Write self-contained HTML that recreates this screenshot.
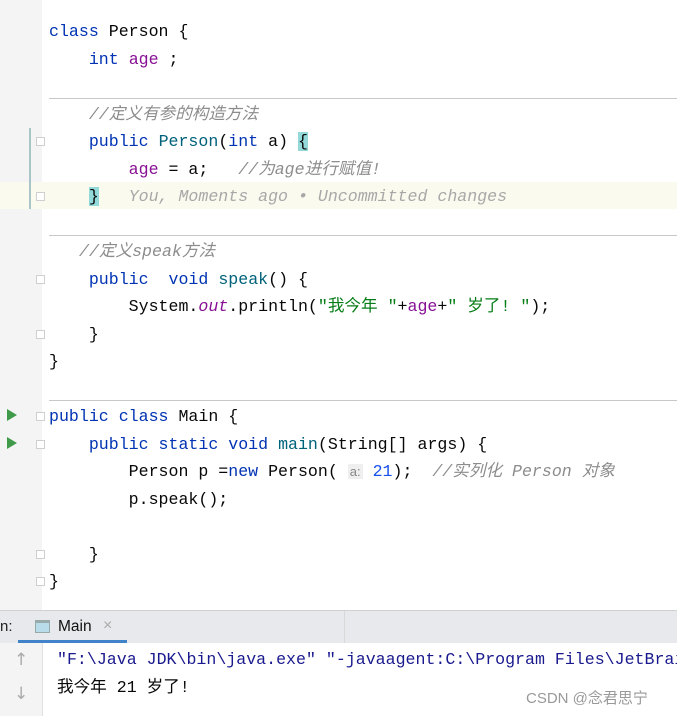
<!DOCTYPE html>
<html><head><meta charset="utf-8"><style>
body{margin:0;width:677px;height:716px;overflow:hidden;background:#fff;position:relative;font-family:"Liberation Mono","Noto Sans CJK SC",monospace;font-size:16.6px;}
.g{position:absolute;left:0;top:0;width:42px;height:610px;background:#f4f4f4;}
.l{position:absolute;left:49px;white-space:pre;height:27px;line-height:27px;color:#080808;}
.k{color:#0033b3}.f{color:#00627a}.v{color:#871094}.c{color:#8c8c8c;font-style:italic}.s{color:#067d17}.n{color:#1750eb}
.sep{position:absolute;left:49px;right:0;height:1px;background:#c8c8c8}
.br{background:#93d9d9}
.run{position:absolute;left:7px;width:0;height:0;border-left:10px solid #3f9b4a;border-top:6px solid transparent;border-bottom:6px solid transparent}
.fold{position:absolute;left:36px;width:9px;height:9px;border:1px solid #cfcfcf;background:#fff;box-sizing:border-box}
</style></head><body>
<div class="g"></div>
<div style="position:absolute;left:0;top:182px;width:677px;height:27px;background:#fbfaee"></div>
<div style="position:absolute;left:29px;top:128px;width:2px;height:81px;background:#a9c5c8"></div>
<div class="sep" style="top:98px"></div>
<div class="sep" style="top:235px"></div>
<div class="sep" style="top:400px"></div>
<div class="run" style="top:409px"></div>
<div class="run" style="top:437px"></div>
<div class="fold" style="top:137px"></div><div class="fold" style="top:192px"></div>
<div class="fold" style="top:275px"></div><div class="fold" style="top:330px"></div>
<div class="fold" style="top:412px"></div><div class="fold" style="top:440px"></div>
<div class="fold" style="top:550px"></div><div class="fold" style="top:577px"></div>
<div class="l" style="top:18px"><span class="k">class</span> Person {</div>
<div class="l" style="top:46px">    <span class="k">int</span> <span class="v">age</span> ;</div>
<div class="l" style="top:101px">    <span class="c">//定义有参的构造方法</span></div>
<div class="l" style="top:128px">    <span class="k">public</span> <span class="f">Person</span>(<span class="k">int</span> a) <span class="br">{</span></div>
<div class="l" style="top:156px">        <span class="v">age</span> = a;   <span class="c">//为age进行赋值!</span></div>
<div class="l" style="top:183px">    <span class="br">}</span>   <span class="c" style="color:#a8a8a8">You, Moments ago • Uncommitted changes</span></div>
<div class="l" style="top:238px;left:79px"><span class="c">//定义speak方法</span></div>
<div class="l" style="top:266px">    <span class="k">public</span>  <span class="k">void</span> <span class="f">speak</span>() {</div>
<div class="l" style="top:293px">        System.<span class="v" style="font-style:italic">out</span>.println(<span class="s">"我今年 "</span>+<span class="v">age</span>+<span class="s">" 岁了! "</span>);</div>
<div class="l" style="top:321px">    }</div>
<div class="l" style="top:348px">}</div>
<div class="l" style="top:403px"><span class="k">public class</span> Main {</div>
<div class="l" style="top:431px">    <span class="k">public static void</span> <span class="f">main</span>(String[] args) {</div>
<div class="l" style="top:458px">        Person p =<span class="k">new</span> Person( <span style="background:#efefef;color:#888;font-size:13px;font-family:'Liberation Sans',sans-serif;padding:0 2px">a:</span> <span class="n">21</span>);  <span class="c">//实列化 Person 对象</span></div>
<div class="l" style="top:486px">        p.speak();</div>
<div class="l" style="top:541px">    }</div>
<div class="l" style="top:568px">}</div>
<!-- bottom panel -->
<div style="position:absolute;left:0;top:610px;width:677px;height:33px;background:#e8e9ec;border-top:1px solid #d0d0d0;box-sizing:border-box"></div>
<div style="position:absolute;left:344px;top:611px;width:1px;height:32px;background:#d8d8d8"></div>
<div style="position:absolute;left:0;top:618px;font-family:'Liberation Sans',sans-serif;font-size:15px;color:#222">n:</div>
<div style="position:absolute;left:35px;top:620px;width:15px;height:13px;border:1px solid #9aa;background:#b8dcea;box-sizing:border-box;border-top-width:3px"></div>
<div style="position:absolute;left:58px;top:618px;font-family:'Liberation Sans',sans-serif;font-size:15.5px;color:#111">Main</div>
<div style="position:absolute;left:103px;top:617px;font-family:'Liberation Sans',sans-serif;font-size:16px;color:#aaa">×</div>
<div style="position:absolute;left:18px;top:640px;width:109px;height:3px;background:#4083c9"></div>
<div style="position:absolute;left:0;top:643px;width:42px;height:73px;background:#f4f4f4;border-right:1px solid #e0e0e0"></div>
<div style="position:absolute;left:14px;top:650px;font-family:'DejaVu Sans',sans-serif;font-size:17px;color:#aaa">↑</div>
<div style="position:absolute;left:14px;top:684px;font-family:'DejaVu Sans',sans-serif;font-size:17px;color:#aaa">↓</div>
<div class="l" style="left:57px;top:646px;color:#1a1a8f">"F:\Java JDK\bin\java.exe" "-javaagent:C:\Program Files\JetBrains</div>
<div class="l" style="left:57px;top:674px">我今年 21 岁了!</div>
<div style="position:absolute;left:526px;top:687px;font-family:'Liberation Sans','Noto Sans CJK SC',sans-serif;font-size:15px;color:#999">CSDN @念君思宁</div>
</body></html>
